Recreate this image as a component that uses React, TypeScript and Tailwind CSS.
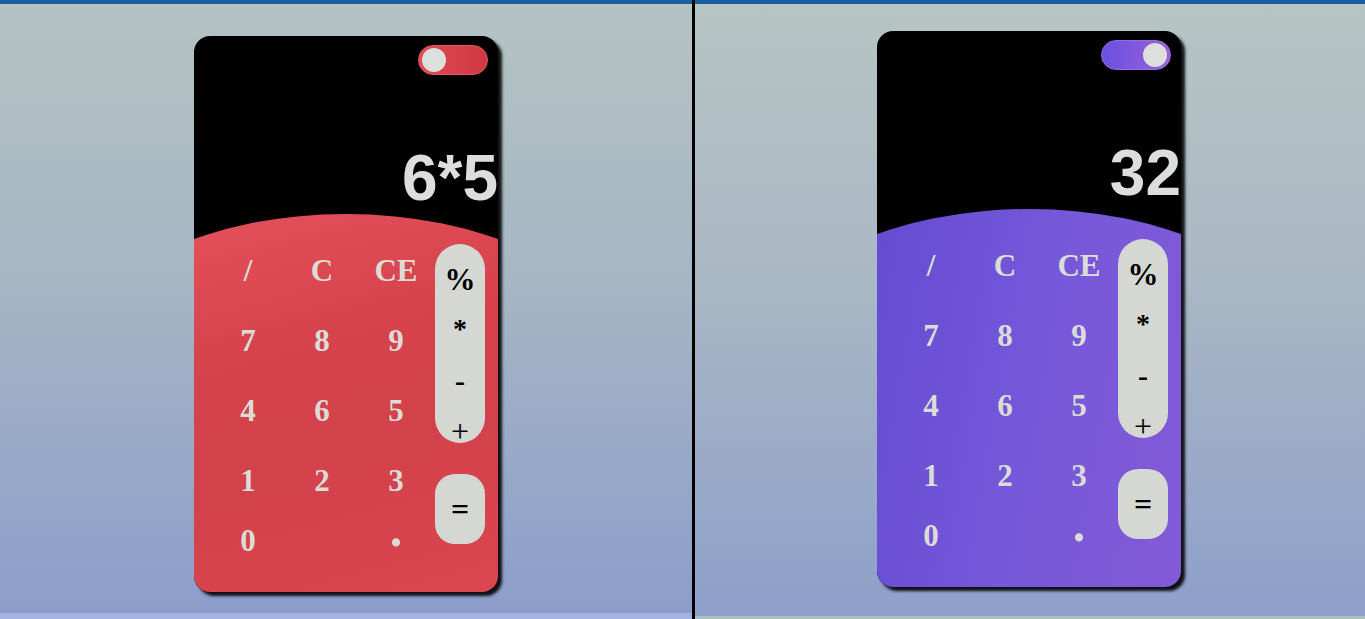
import React from "react";

type Theme = "red" | "purple";

function Toggle({ theme }: { theme: Theme }) {
  if (theme === "red") {
    return (
      <div className="flex h-[30px] w-[70px] items-center justify-start rounded-full border border-[#e55a62] bg-[linear-gradient(90deg,#e04a54,#cf3842)] p-[3px]">
        <div className="h-[24px] w-[24px] rounded-full bg-[#dcdfdc]" />
      </div>
    );
  }
  return (
    <div className="flex h-[30px] w-[70px] items-center justify-end rounded-full border border-[#9a6ae0] bg-[linear-gradient(90deg,#6a4fe2,#9a62d8)] p-[3px]">
      <div className="h-[24px] w-[24px] rounded-full bg-[#dcdfdc]" />
    </div>
  );
}

const keys = ["/", "C", "CE", "7", "8", "9", "4", "6", "5", "1", "2", "3", "0", ""];

function Calculator({ theme, value }: { theme: Theme; value: string }) {
  const body =
    theme === "red"
      ? "bg-[linear-gradient(165deg,#e7535c_0%,#d6434d_35%,#d3414b_60%,#dc4751_100%)]"
      : "bg-[linear-gradient(100deg,#5c45cd_0%,#7558da_50%,#8a5bd5_100%)]";
  return (
    <div className="flex h-[556px] w-[304px] flex-col overflow-hidden rounded-[16px] bg-black shadow-[4px_4px_3px_rgba(0,0,0,0.9)]">
      <div className="flex h-[178px] flex-col">
        <div className="flex justify-end pr-[10px] pt-[9px]">
          <Toggle theme={theme} />
        </div>
        <div className="mb-[4px] mt-auto text-right font-['Liberation_Sans',Arial,sans-serif] text-[64px] font-bold leading-none text-[#dcdedb]">
          {value}
        </div>
      </div>
      <div className={`-mx-[100px] flex-1 rounded-t-[50%_124px] px-[100px] ${body}`}>
        <div className="flex">
          <div className="grid grid-cols-[repeat(3,74px)] grid-rows-[70px_70px_70px_70px_50px] pl-[17px] pt-[21px] font-['Liberation_Serif','Times_New_Roman',serif] text-[31px] font-bold text-[#dcdcd6]">
            {keys.map((k, i) => (
              <div key={i} className="flex items-center justify-center leading-none">
                {k}
              </div>
            ))}
            <div className="flex items-center justify-center text-[50px] leading-none">
              <span className="-translate-y-[11px]">.</span>
            </div>
          </div>
          <div className="ml-[2px] flex flex-col font-['Liberation_Serif','Times_New_Roman',serif] text-black">
            <div className="mt-[30px] flex h-[199px] w-[50px] flex-col rounded-full bg-[#d5d7d2] pt-[10px]">
              <div className="flex h-[50px] shrink-0 items-center justify-center text-[31px] font-bold leading-none">%</div>
              <div className="flex h-[50px] shrink-0 items-center justify-center text-[28px] font-bold leading-none">*</div>
              <div className="flex h-[54px] shrink-0 items-center justify-center text-[30px] font-bold leading-none">-</div>
              <div className="flex h-[46px] shrink-0 items-center justify-center text-[32px] leading-none">+</div>
            </div>
            <div className="mt-[31px] flex h-[70px] w-[50px] items-center justify-center rounded-[20px] bg-[#d5d7d2] text-[32px] font-bold leading-none">
              =
            </div>
          </div>
        </div>
      </div>
    </div>
  );
}

export default function App() {
  return (
    <div className="flex h-[619px] w-[1365px] overflow-hidden">
      <div className="flex w-[692px] flex-col bg-[linear-gradient(180deg,#b4c3c2_0%,#a6b6c4_45%,#8c9dcb_100%)]">
        <div className="h-[4px] bg-[#1b5e9d]" />
        <div className="flex-1 pl-[194px] pt-[32px]">
          <Calculator theme="red" value="6*5" />
        </div>
        <div className="h-[6px] bg-[#a6b2e4]" />
      </div>
      <div className="w-[3px] bg-black" />
      <div className="flex flex-1 flex-col bg-[linear-gradient(180deg,#b6c5c3_0%,#a9b8c4_45%,#8e9fca_100%)]">
        <div className="h-[4px] bg-[#1b5e9d]" />
        <div className="flex-1 pl-[182px] pt-[27px]">
          <Calculator theme="purple" value="32" />
        </div>
        <div className="h-[3px] bg-[#a9bfc0]" />
      </div>
    </div>
  );
}
